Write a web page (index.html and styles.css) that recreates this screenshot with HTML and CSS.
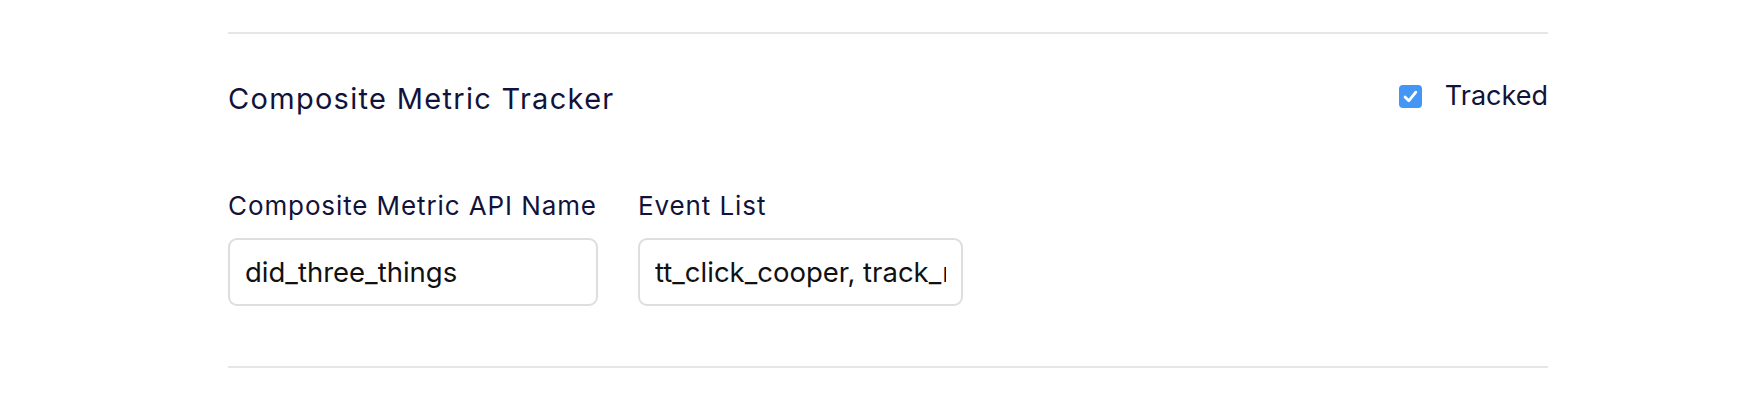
FILE: index.html
```html
<!DOCTYPE html>
<html>
<head>
<meta charset="utf-8">
<link rel="stylesheet" href="styles.css">
</head>
<body>
<div class="page">
  <section class="section">
    <div class="header">
      <h2 class="title">Composite Metric Tracker</h2>
      <label class="track">
        <span class="cb"><svg width="23" height="23" viewBox="0 0 23 23"><path d="M6 12 L9.8 15.8 L16.8 7.2" fill="none" stroke="#fff" stroke-width="2.8" stroke-linecap="round" stroke-linejoin="round"/></svg></span>
        <span class="track-label">Tracked</span>
      </label>
    </div>
    <div class="fields">
      <div class="field f1">
        <div class="label">Composite Metric API Name</div>
        <input class="input" type="text" readonly value="did_three_things">
      </div>
      <div class="field f2">
        <div class="label">Event List</div>
        <input class="input" type="text" readonly value="tt_click_cooper, track_reader, tt_share">
      </div>
    </div>
  </section>
</div>
</body>
</html>
```

FILE: styles.css
```css
* { box-sizing: border-box; }
html, body { margin: 0; padding: 0; background: #fff; }
body { font-family: "Inter", "Lato", sans-serif; color: #12133a; }

.page {
  padding: 32px 192px 0 228px;
}

.section {
  border-top: 2px solid #e6e6e6;
  border-bottom: 2px solid #e6e6e6;
  padding-bottom: 60px;
}

.header {
  display: flex;
  justify-content: space-between;
  align-items: flex-start;
}

.title {
  margin: 47px 0 0 0;
  font-size: 29px;
  line-height: 36px;
  font-weight: 400;
  letter-spacing: 1.3px;
}

.track {
  margin-top: 44px;
  display: flex;
  align-items: center;
  gap: 23px;
  font-size: 27px;
  line-height: 36px;
}

.cb {
  width: 23px;
  height: 23px;
  border-radius: 4px;
  background: #4396f6;
  display: block;
  margin-top: 1px;
}
.cb svg { display: block; }

.fields {
  display: flex;
  gap: 40px;
  margin-top: 74px;
}

.field { display: flex; flex-direction: column; }

.label {
  font-size: 26px;
  line-height: 30px;
  margin-bottom: 17px;
  letter-spacing: 0.9px;
}

.input {
  height: 68px;
  border: 2px solid #dedede;
  border-radius: 9px;
  padding: 0 15px;
  font-family: "Inter", "Roboto", sans-serif;
  font-size: 27.5px;
  color: #111;
  background: #fff;
  outline: none;
}

.f1 .input { width: 370px; }
.f2 .input { width: 325px; }
```
